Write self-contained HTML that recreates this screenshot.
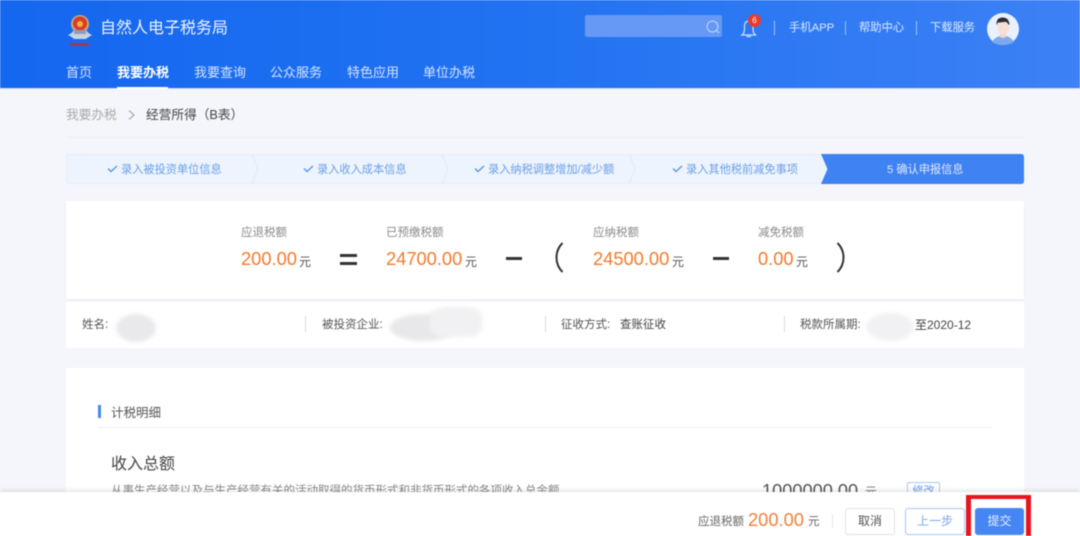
<!DOCTYPE html>
<html lang="zh-CN"><head><meta charset="utf-8"><title>自然人电子税务局</title>
<style>
html,body{margin:0;padding:0}
body{width:1080px;height:536px;overflow:hidden;background:#f5f6fb;font-family:"Liberation Sans","Noto Sans CJK SC",sans-serif;position:relative}
#r{position:absolute;left:0;top:0;width:1080px;height:536px;overflow:hidden;filter:blur(.4px)}
.a{position:absolute;white-space:nowrap}
.t{position:absolute;white-space:nowrap;line-height:16px;font-size:12px}
.n{color:#f47a2c;font-size:18.3px;line-height:24px;position:absolute;white-space:nowrap}
.l{color:#8a8a8a}
.u{color:#555}
.nav{color:#d6e5ff;font-size:13px;line-height:18px;top:64px;position:absolute;white-space:nowrap}
.top{color:#dbe8ff;font-size:11.3px;line-height:16px;top:20px;position:absolute;white-space:nowrap}
.sep{position:absolute;width:1px;background:#9cc0fa;top:21px;height:14px}
.isep{position:absolute;width:1px;background:#dcdcdc;top:316px;height:16px}
.bar{position:absolute;height:2.5px;background:#333}
.st{position:absolute;top:162px;font-size:11.2px;line-height:16px;color:#6b9ee8;white-space:nowrap}
.ck{position:absolute;top:164px}
.b{position:absolute;top:508px;height:27px;box-sizing:border-box;border-radius:3px;text-align:center;font-size:12px;line-height:25px}
.blob{position:absolute;border-radius:50%;filter:blur(2px)}
</style></head><body><div id="r">

<!-- header -->
<div class="a" style="left:0;top:0;width:1080px;height:88px;background:linear-gradient(90deg,#1467ef 0%,#2273f2 50%,#3d81f5 100%)"></div>
<div class="a" style="left:0;top:88px;width:1080px;height:1px;background:#c9dcfb"></div>
<svg class="a" style="left:66px;top:11px" width="28" height="36" viewBox="0 0 28 36">
<path d="M2 24 Q7 22 8 18 L20 18 Q21 22 26 24 Q21 27 20 28 L8 28 Q6 26 2 24Z" fill="#c6d3e4"/>
<circle cx="14" cy="13" r="9" fill="#c8a77a"/>
<circle cx="14" cy="12.5" r="7" fill="#d93a2b"/>
<circle cx="14" cy="13" r="3" fill="#f2b233"/>
<rect x="8" y="19" width="12" height="4" fill="#8b9cb3"/>
<rect x="4" y="32" width="19" height="3" fill="#b03344" opacity=".8"/>
</svg>
<div class="a" style="left:100px;top:19px;font-size:16px;line-height:20px;color:#eef4ff">自然人电子税务局</div>

<div class="nav" style="left:66px">首页</div>
<div class="nav" style="left:117px;color:#fff;font-weight:bold">我要办税</div>
<div class="nav" style="left:194px">我要查询</div>
<div class="nav" style="left:270px">公众服务</div>
<div class="nav" style="left:347px">特色应用</div>
<div class="nav" style="left:423px">单位办税</div>
<div class="a" style="left:117px;top:87px;width:51px;height:2px;background:#fff"></div>

<div class="a" style="left:585px;top:15px;width:137px;height:22px;border-radius:2px;background:#6599f5"></div>
<svg class="a" style="left:704px;top:18px" width="18" height="18" viewBox="0 0 18 18" fill="none" stroke="#c2d8fb" stroke-width="1"><circle cx="8.5" cy="8.5" r="5.5"/><path d="M12.5 12.5L15 15"/></svg>

<svg class="a" style="left:738px;top:14px" width="24" height="24" viewBox="0 0 24 24" fill="none" stroke="#cfe0fd" stroke-width="1.2"><path d="M4 21 Q6.5 19 6.5 15 V12 Q6.5 7.5 10.5 7 Q15 7.500 15 12 V15 Q15 19 17.5 21 Z"/><path d="M8.5 22.5 H13"/></svg>
<div class="a" style="left:748px;top:14px;width:13px;height:13px;border-radius:50%;background:#ea3a30;color:#ffe;font-size:8px;line-height:13px;text-align:center">6</div>

<div class="sep" style="left:774px"></div>
<div class="top" style="left:789px">手机APP</div>
<div class="sep" style="left:845px"></div>
<div class="top" style="left:859px">帮助中心</div>
<div class="sep" style="left:916px"></div>
<div class="top" style="left:930px">下载服务</div>

<svg class="a" style="left:987px;top:13px" width="32" height="32" viewBox="0 0 32 32">
<circle cx="16" cy="16" r="16" fill="#e9f1fc"/>
<path d="M5 29 Q8 24 13 23 L19 23 Q24 24 27 29 Q22 32 16 32 Q10 32 5 29Z" fill="#7ea9ee"/>
<path d="M13 19 H19 V24 Q16 26 13 24Z" fill="#f3d5c8"/>
<ellipse cx="16" cy="14" rx="6" ry="7.5" fill="#f8e0d6"/>
<path d="M9.5 12 Q9 5 15 4.5 Q22 4 22.5 12 L21 11 Q20 8.5 17 9 Q13 9.5 11 9.5 Z" fill="#2d2f36"/>
</svg>

<!-- breadcrumb -->
<div class="a" style="left:66px;top:106px;font-size:12.7px;line-height:18px;color:#a9a9a9">我要办税</div>
<svg class="a" style="left:127px;top:109px" width="10" height="12" viewBox="0 0 10 12" fill="none" stroke="#999" stroke-width="1"><path d="M2 1.5L7 6L2 10.5"/></svg>
<div class="a" style="left:146px;top:106px;font-size:12.7px;line-height:18px;color:#444">经营所得（B表）</div>
<div class="a" style="left:66px;top:137px;width:958px;height:1px;background:#eeeef2"></div>

<!-- steps -->
<svg class="a" style="left:66px;top:153px" width="958" height="32" viewBox="0 0 958 32">
<rect x=".5" y="1.5" width="957" height="29" rx="2" fill="#edf4fd" stroke="#e4edf8"/>
<g fill="none" stroke="#dfe9f6" stroke-width="1"><path d="M186 1L192 16L186 31"/><path d="M376 1L382 16L376 31"/><path d="M563 1L569 16L563 31"/></g>
<path d="M755 1H955Q958 1 958 4V28Q958 31 955 31H755L761.500 16Z" fill="#3f82f2"/>
</svg>
<svg class="ck" style="left:107px" width="11" height="10" viewBox="0 0 11 10" fill="none" stroke="#5f95e6" stroke-width="1.4"><path d="M1 4.5L4 7.500L10 2"/></svg>
<div class="st" style="left:121px">录入被投资单位信息</div>
<svg class="ck" style="left:303px" width="11" height="10" viewBox="0 0 11 10" fill="none" stroke="#5f95e6" stroke-width="1.4"><path d="M1 4.5L4 7.500L10 2"/></svg>
<div class="st" style="left:317px">录入收入成本信息</div>
<svg class="ck" style="left:474px" width="11" height="10" viewBox="0 0 11 10" fill="none" stroke="#5f95e6" stroke-width="1.4"><path d="M1 4.5L4 7.500L10 2"/></svg>
<div class="st" style="left:488px">录入纳税调整增加/减少额</div>
<svg class="ck" style="left:672px" width="11" height="10" viewBox="0 0 11 10" fill="none" stroke="#5f95e6" stroke-width="1.4"><path d="M1 4.5L4 7.500L10 2"/></svg>
<div class="st" style="left:686px">录入其他税前减免事项</div>
<div class="st" style="left:887px;color:#dfeaff">5 确认申报信息</div>

<!-- summary card -->
<div class="a" style="left:66px;top:201px;width:958px;height:98px;background:#fff;box-shadow:0 1px 2px rgba(0,0,0,.06)"></div>
<div class="t l" style="left:241px;top:225px;font-size:11.5px">应退税额</div>
<div class="n" style="left:241px;top:247px">200.00</div>
<div class="t u" style="left:299px;top:254px">元</div>
<div class="bar" style="left:340px;top:254px;width:17px"></div>
<div class="bar" style="left:340px;top:262px;width:17px"></div>
<div class="t l" style="left:386px;top:225px;font-size:11.5px">已预缴税额</div>
<div class="n" style="left:386px;top:247px">24700.00</div>
<div class="t u" style="left:465px;top:254px">元</div>
<div class="bar" style="left:506px;top:257px;width:16px"></div>
<svg class="a" style="left:553px;top:241px" width="12" height="33" viewBox="0 0 12 33" fill="none" stroke="#333" stroke-width="2"><path d="M9.500 2Q3.500 8 3.500 16.500Q3.500 25 9.500 31"/></svg>
<div class="t l" style="left:593px;top:225px;font-size:11.5px">应纳税额</div>
<div class="n" style="left:593px;top:247px">24500.00</div>
<div class="t u" style="left:672px;top:254px">元</div>
<div class="bar" style="left:713px;top:257px;width:16px"></div>
<div class="t l" style="left:758px;top:225px;font-size:11.5px">减免税额</div>
<div class="n" style="left:758px;top:247px">0.00</div>
<div class="t u" style="left:796px;top:254px">元</div>
<svg class="a" style="left:835px;top:241px" width="12" height="33" viewBox="0 0 12 33" fill="none" stroke="#333" stroke-width="2"><path d="M2.500 2Q8.500 8 8.500 16.500Q8.500 25 2.500 31"/></svg>

<!-- info row -->
<div class="a" style="left:66px;top:302px;width:958px;height:46px;background:#fff"></div>
<div class="t u" style="left:82px;top:317px;font-size:11.5px">姓名:</div>
<div class="blob" style="left:116px;top:314px;width:40px;height:28px;background:#e9e9eb"></div>
<div class="isep" style="left:305px"></div>
<div class="t u" style="left:322px;top:317px;font-size:11.5px">被投资企业:</div>
<div class="blob" style="left:390px;top:314px;width:66px;height:27px;background:#e8e8ea"></div>
<div class="blob" style="left:430px;top:307px;width:52px;height:30px;background:#f1f1f3;border-radius:30%"></div>
<div class="isep" style="left:545px"></div>
<div class="t u" style="left:561px;top:317px;font-size:11.5px">征收方式:</div>
<div class="t" style="left:620px;top:317px;color:#444;font-size:11.500px">查账征收</div>
<div class="isep" style="left:784px"></div>
<div class="t u" style="left:800px;top:317px;font-size:11.5px">税款所属期:</div>
<div class="blob" style="left:866px;top:313px;width:48px;height:28px;background:#f1f1f3"></div>
<div class="t" style="left:915px;top:317px;color:#444">至2020-12</div>

<!-- detail card -->
<div class="a" style="left:66px;top:368px;width:958px;height:140px;background:#fff"></div>
<div class="a" style="left:98px;top:405px;width:3px;height:13px;background:#4b86ee"></div>
<div class="a" style="left:111px;top:404px;font-size:12.500px;line-height:18px;color:#555">计税明细</div>
<div class="a" style="left:98px;top:427px;width:894px;height:1px;background:#eeeff3"></div>
<div class="a" style="left:111px;top:455px;font-size:16px;line-height:20px;color:#444">收入总额</div>
<div class="a" style="left:111px;top:483px;font-size:11.500px;line-height:16px;color:#888">从事生产经营以及与生产经营有关的活动取得的货币形式和非货币形式的各项收入总金额</div>
<div class="a" style="left:762px;top:480px;font-size:18.200px;line-height:22px;color:#555">1000000.00</div>
<div class="a" style="left:865px;top:484px;font-size:12px;line-height:16px;color:#777">元</div>
<div class="a" style="left:907px;top:482px;width:33px;height:18px;box-sizing:border-box;border:1px solid #a9c6f5;border-radius:2px;font-size:11px;line-height:16px;color:#6b9ee8;text-align:center">修改</div>

<!-- footer -->
<div class="a" style="left:0;top:492px;width:1080px;height:44px;background:#fff;box-shadow:0 -2px 4px rgba(0,0,0,.1)"></div>
<div class="a" style="left:698px;top:514px;font-size:11.500px;line-height:16px;color:#666">应退税额</div>
<div class="a" style="left:748px;top:508px;font-size:18.300px;line-height:24px;color:#f0803a">200.00</div>
<div class="a" style="left:808px;top:514px;font-size:11.500px;line-height:16px;color:#666">元</div>
<div class="a" style="left:832px;top:514px;width:1px;height:14px;background:#e6e6e6"></div>
<div class="b" style="left:845px;width:50px;border:1px solid #e3e3e3;color:#555;background:#fff">取消</div>
<div class="b" style="left:905px;width:60px;border:1px solid #a9c6f5;color:#7aa6ee;background:#fff">上一步</div>
<div class="b" style="left:975px;width:49px;background:#4586f3;color:#e6efff;line-height:27px">提交</div>
<div class="a" style="left:966px;top:495px;width:65px;height:46px;box-sizing:border-box;border:5px solid #e8141f;border-top-width:4px"></div>
</div></body></html>
